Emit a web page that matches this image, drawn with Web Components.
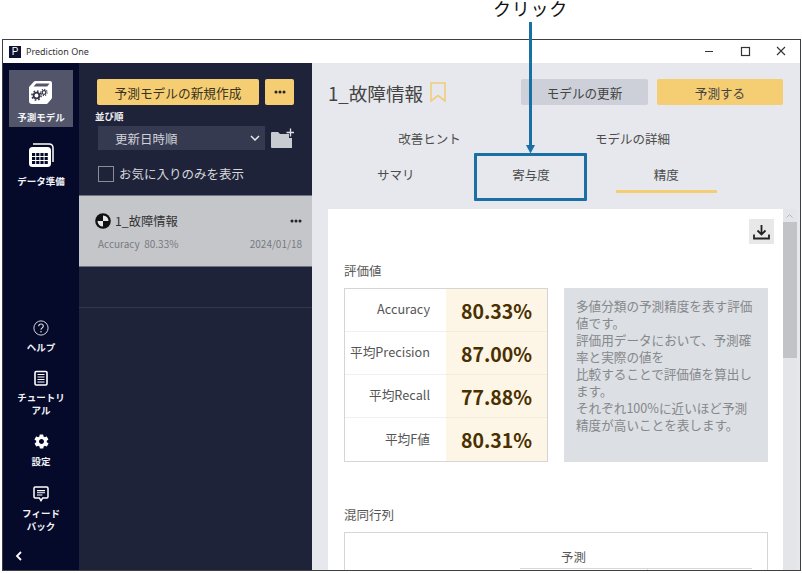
<!DOCTYPE html>
<html lang="ja">
<head>
<meta charset="utf-8">
<title>Prediction One</title>
<style>
  html, body { margin: 0; height: 100%; background: #fff; overflow: hidden; }
  body { font-family: "Noto Sans CJK JP", "Noto Sans", sans-serif; }
  svg { display: block; }
</style>
</head>
<body>
<app-window>
  <title-bar></title-bar>
  <nav-rail>
    <nav-item active>
      <svg slot="icon" style="margin-left:-2px" width="25" height="25" viewBox="0 0 25 25">
        <path d="M1 7 L6 1.5 Q6.5 1 7.5 1 H22 Q24 1 24 3 V17.5 Q24 18.5 23 19.5 L19.5 23.5 Q19 24 18 24 H4 Q1 24 1 21 Z" fill="#fff"/>
        <path d="M5.5 6.5 L8.2 3.5 H21.5 L19.2 6.5 Z" fill="#53566a"/>
        <circle cx="8.5" cy="15.5" r="2.9" fill="none" stroke="#33364a" stroke-width="1.9"/>
        <circle cx="8.5" cy="15.5" r="4.6" fill="none" stroke="#33364a" stroke-width="1.5" stroke-dasharray="1.7 1.9"/>
        <circle cx="16" cy="12.5" r="1.8" fill="none" stroke="#33364a" stroke-width="1.2"/>
        <circle cx="16" cy="12.5" r="3.1" fill="none" stroke="#33364a" stroke-width="1.1" stroke-dasharray="1.2 1.2"/>
      </svg>
      予測モデル
    </nav-item>
    <nav-item tight>
      <svg slot="icon" width="26" height="24" viewBox="0 0 26 24">
        <path d="M5 1 H21 Q25 1 25 5 V19" fill="none" stroke="#fff" stroke-width="1.5"/>
        <rect x="1" y="4" width="22" height="20" rx="3.5" fill="#fff"/>
        <path fill="#05092a" d="M4 10h3.2v3H4zM8.2 10h3.2v3H8.2zM12.4 10h3.2v3h-3.2zM16.6 10h3.2v3h-3.2zM4 14h3.2v3H4zM8.2 14h3.2v3H8.2zM12.4 14h3.2v3h-3.2zM16.6 14h3.2v3h-3.2zM4 18h3.2v3H4zM8.2 18h3.2v3H8.2zM12.4 18h3.2v3h-3.2zM16.6 18h3.2v3h-3.2z"/>
      </svg>
      データ準備
    </nav-item>
    <span class="spacer"></span>
    <nav-item>
      <svg slot="icon" width="16" height="16" viewBox="0 0 18 18">
        <circle cx="9" cy="9" r="8" fill="none" stroke="#d8d9e0" stroke-width="1.1"/>
        <path d="M6.4 7 Q6.5 4.5 9 4.5 Q11.6 4.5 11.6 6.8 Q11.6 8 10.2 8.9 Q9 9.6 9 11" fill="none" stroke="#d8d9e0" stroke-width="1.3"/>
        <circle cx="9" cy="13.2" r=".9" fill="#d8d9e0"/>
      </svg>
      ヘルプ
    </nav-item>
    <nav-item>
      <svg slot="icon" width="14" height="16" viewBox="0 0 14 16">
        <rect x="1" y="1.5" width="12" height="13.5" rx="1.2" fill="none" stroke="#fff" stroke-width="1.6"/>
        <path d="M3.5 4.5 H10.5 M3.5 7 H10.5 M3.5 9.5 H10.5 M3.5 12 H10.5" stroke="#fff" stroke-width="1.1"/>
      </svg>
      チュートリ<br>アル
    </nav-item>
    <nav-item wide>
      <svg slot="icon" width="17" height="17" viewBox="0 0 24 24">
        <path fill="#fff" d="M19.4 13c.1-.3.1-.7.1-1s0-.7-.1-1l2.1-1.6c.2-.2.2-.4.1-.6l-2-3.5c-.1-.2-.4-.3-.6-.2l-2.5 1c-.5-.4-1.1-.7-1.7-1l-.4-2.6c0-.3-.2-.5-.5-.5h-4c-.3 0-.5.2-.5.5l-.4 2.6c-.6.3-1.2.6-1.7 1l-2.5-1c-.2-.1-.5 0-.6.2l-2 3.5c-.1.2-.1.4.1.6L4.6 11c-.1.3-.1.7-.1 1s0 .7.1 1l-2.1 1.6c-.2.2-.2.4-.1.6l2 3.5c.1.2.4.3.6.2l2.5-1c.5.4 1.1.7 1.7 1l.4 2.6c0 .3.2.5.5.5h4c.3 0 .5-.2.5-.5l.4-2.6c.6-.3 1.2-.6 1.7-1l2.5 1c.2.1.5 0 .6-.2l2-3.5c.1-.2.1-.4-.1-.6L19.4 13zM12 15.5c-1.9 0-3.5-1.6-3.5-3.5s1.6-3.5 3.5-3.5 3.5 1.6 3.5 3.5-1.6 3.5-3.5 3.5z"/>
      </svg>
      設定
    </nav-item>
    <nav-item>
      <svg slot="icon" width="16" height="16" viewBox="0 0 16 16">
        <path d="M2.2 1 H13.8 Q15 1 15 2.2 V10.8 Q15 12 13.8 12 H9.6 L8 14.6 L6.4 12 H2.2 Q1 12 1 10.8 V2.2 Q1 1 2.2 1 Z" fill="none" stroke="#fff" stroke-width="1.5"/>
        <path d="M4 4.6 H12 M4 6.8 H12 M4 9 H9.4" stroke="#fff" stroke-width="1.1"/>
      </svg>
      フィード<br>バック
    </nav-item>
    <svg class="collapse" width="8" height="10" viewBox="0 0 8 10"><path d="M6 1 L2 5 L6 9" fill="none" stroke="#fff" stroke-width="1.8"/></svg>
  </nav-rail>
  <model-list></model-list>
  <main-pane>
    <score-table></score-table>
    <info-note>多値分類の予測精度を表す評価値です。<br>評価用データにおいて、予測確率と実際の値を<br>比較することで評価値を算出します。<br>それぞれ100%に近いほど予測精度が高いことを表します。</info-note>
  </main-pane>
</app-window>
<click-note></click-note>

<script>
const ICON_DOTS = `<svg width="12" height="4" viewBox="0 0 12 4"><circle cx="2" cy="2" r="1.5"/><circle cx="6" cy="2" r="1.5"/><circle cx="10" cy="2" r="1.5"/></svg>`;

class AppWindow extends HTMLElement {
    constructor() {
        super();
        this.attachShadow({ mode: 'open' });
        this.shadowRoot.innerHTML = `
            <style>
                :host {
                    display: grid;
                    grid-template-columns: 76px 233px 1fr;
                    grid-template-rows: 23px 1fr;
                    box-sizing: border-box;
                    width: 799px;
                    height: 532px;
                    margin: 39px 0 0 2px;
                    border: 1px solid #3c4043;
                    overflow: hidden;
                    background: #e6e8ed;
                }
                ::slotted(title-bar) { grid-column: 1 / -1; }
            </style>
            <slot></slot>
        `;
    }
}

class TitleBar extends HTMLElement {
    constructor() {
        super();
        this.attachShadow({ mode: 'open' });
        this.shadowRoot.innerHTML = `
            <style>
                :host {
                    display: flex;
                    align-items: center;
                    background: #fff;
                    padding-left: 6px;
                    font: 9px "Noto Sans", sans-serif;
                    color: #333;
                }
                .logo {
                    width: 12px; height: 12px; margin-right: 5px;
                    background: #0d1030; color: #fff;
                    font: 10px/12px "Liberation Sans", sans-serif;
                    text-align: center;
                }
                .controls { margin-left: auto; display: flex; }
                .controls svg { width: 36px; height: 23px; display: block; }
            </style>
            <span class="logo">P</span>Prediction One
            <span class="controls">
                <svg viewBox="0 0 36 23"><path d="M13 11.5 H21" stroke="#333"/></svg>
                <svg viewBox="0 0 36 23"><rect x="13.5" y="7.5" width="8" height="8" fill="none" stroke="#333" stroke-width="1.2"/></svg>
                <svg viewBox="0 0 36 23"><path d="M13 7 L21 15 M21 7 L13 15" stroke="#333" stroke-width="1.1"/></svg>
            </span>
        `;
    }
}

class NavRail extends HTMLElement {
    constructor() {
        super();
        this.attachShadow({ mode: 'open' });
        this.shadowRoot.innerHTML = `
            <style>
                :host {
                    display: flex;
                    flex-direction: column;
                    align-items: center;
                    background: #05092a;
                    padding-top: 7px;
                    height: 100%;
                    box-sizing: border-box;
                }
                ::slotted(.spacer) { flex: 1; }
                ::slotted(.collapse) { align-self: flex-start; margin: 2px 0 9px 12px; }
            </style>
            <slot></slot>
        `;
    }
}

class NavItem extends HTMLElement {
    constructor() {
        super();
        this.attachShadow({ mode: 'open' });
        this.shadowRoot.innerHTML = `
            <style>
                :host {
                    display: flex;
                    flex-direction: column;
                    align-items: center;
                    box-sizing: border-box;
                    width: 64px;
                    margin-bottom: 16px;
                    color: #f2f3f7;
                    font-family: "Liberation Sans", "Noto Sans CJK JP", sans-serif;
                    font-size: 9.5px;
                    font-weight: 700;
                    line-height: 13px;
                    text-align: center;
                }
                :host([active]) {
                    background: #53566a;
                    height: 57px;
                    justify-content: flex-end;
                    padding-bottom: 3px;
                }
                :host([wide]) { margin-bottom: 18.5px; }
                .icon { margin-bottom: 5px; }
                :host([active]) .icon { margin-bottom: 6px; }
                :host([tight]) .icon { margin-bottom: 8px; }
            </style>
            <div class="icon"><slot name="icon"></slot></div>
            <div><slot></slot></div>
        `;
    }
}

class ModelList extends HTMLElement {
    constructor() {
        super();
        this.attachShadow({ mode: 'open' });
        this.shadowRoot.innerHTML = `
            <style>
                :host {
                    display: flex;
                    flex-direction: column;
                    background: #1f2339;
                    color: #e2e3e8;
                }
                .top { height: 132px; box-sizing: border-box; padding: 16px 18px 0 16px; }
                .row { display: flex; gap: 6px; }
                .btn {
                    height: 26px; display: flex; align-items: center; justify-content: center;
                    background: #f5cd73; border-radius: 2px; color: #3a3320;
                    font-size: 12.7px;
                }
                .new { width: 162px; margin-left: 2px; }
                .more { width: 29px; fill: #222; }
                .sort { margin: 4px 0 3px; font-size: 9.5px; font-weight: 700; line-height: 14px; color: #f0f0f0; }
                .select {
                    width: 167px; height: 24px; margin-left: 3px; box-sizing: border-box;
                    display: flex; align-items: center; justify-content: space-between;
                    padding: 0 5px 0 17px; background: #363a50; font-size: 12.5px; color: #cfd1d8;
                }
                .sortrow { align-items: center; }
                .check { display: flex; align-items: center; margin: 14px 0 0 3px; font-size: 12.5px; color: #d6d7dc; }
                .box { width: 14px; height: 14px; border: 1px solid #8a8c98; margin-right: 5px; }
                .card {
                    height: 72px; box-sizing: border-box; padding: 15px 10px 0 16px;
                    background: #c4c6ca; color: #333;
                    border-top: 1px solid #6f7284; border-bottom: 1px solid #6f7284;
                }
                .name { display: flex; align-items: center; font-size: 12.3px; line-height: 20px; }
                .name svg:first-child { margin-right: 4px; }
                .name svg:last-child { margin-left: auto; fill: #222; }
                .meta { display: flex; justify-content: space-between; margin: 6px 0 0 3px; font-size: 10px; line-height: 14px; color: #777a80; }
                .gap { height: 40px; border-bottom: 1px solid #33374c; }
            </style>
            <div class="top">
                <div class="row">
                    <div class="btn new">予測モデルの新規作成</div>
                    <div class="btn more">${ICON_DOTS}</div>
                </div>
                <div class="sort">並び順</div>
                <div class="row sortrow">
                    <div class="select">更新日時順
                        <svg width="10" height="6" viewBox="0 0 10 6"><path d="M1 1 L5 5 L9 1" fill="none" stroke="#e8e8e8" stroke-width="1.5"/></svg>
                    </div>
                    <svg width="23" height="22" viewBox="0 0 23 22">
                        <path d="M0 6 Q0 5 1 5 H7 L9 7 H21 V21 H1 Q0 21 0 20 Z" fill="#c9cbd2"/>
                        <path d="M19.5 0 V11 M14 5.5 H23" stroke="#1f2339" stroke-width="3"/>
                        <path d="M19.5 1.5 V9.5 M15.5 5.5 H23" stroke="#e0e2e6" stroke-width="1.3"/>
                    </svg>
                </div>
                <div class="check"><span class="box"></span>お気に入りのみを表示</div>
            </div>
            <div class="card">
                <div class="name">
                    <svg width="16" height="16" viewBox="0 0 16 16">
                        <circle cx="8" cy="8" r="7.8" fill="#111"/>
                        <path d="M8 8 V2.5 A5.5 5.5 0 0 1 13.5 8 Z M8 8 V13.5 A5.5 5.5 0 0 1 2.5 8 Z" fill="#e6e6e6"/>
                    </svg>
                    1_故障情報
                    ${ICON_DOTS}
                </div>
                <div class="meta"><span>Accuracy&nbsp; 80.33%</span><span>2024/01/18</span></div>
            </div>
            <div class="gap"></div>
        `;
    }
}

class MainPane extends HTMLElement {
    constructor() {
        super();
        this.attachShadow({ mode: 'open' });
        this.shadowRoot.innerHTML = `
            <style>
                :host {
                    display: block;
                    position: relative;
                    min-width: 0;
                    overflow: hidden;
                    color: #444;
                }
                .head { display: flex; align-items: center; height: 26px; padding: 16px 17px 0 16px; }
                h1 { margin: 1px 0 0; font-size: 18.6px; font-weight: 400; line-height: 26px; }
                .mark { margin-left: 7px; }
                .btn {
                    height: 26px; display: flex; align-items: center; justify-content: center;
                    border-radius: 2px; font-size: 12.6px;
                }
                .update { width: 127px; margin-left: auto; background: #cdd0d8; }
                .run { width: 126px; margin-left: 9px; background: #f5cd73; }
                .tabs { width: 406px; margin: 18px 0 0 16px; font-size: 12.5px; color: #4c4c4c; }
                .tabrow { display: grid; height: 36px; text-align: center; line-height: 31px; }
                .two { grid-template-columns: repeat(2, 1fr); }
                .three { grid-template-columns: repeat(3, 1fr); height: 35px; }
                .on { position: relative; }
                .on::after {
                    content: ""; position: absolute; left: 12.5%; right: 12.5%; bottom: 1px; height: 3px;
                    background: #f5cd73;
                }
                .work { display: flex; align-items: flex-start; margin: 15px 3px 0 16px; }
                .card {
                    flex: 1; height: 361px; box-sizing: border-box; padding: 10px 15px 0 16px;
                    background: #fff; overflow: hidden;
                }
                .dl {
                    width: 25px; height: 25px; margin: 0 -6px 0 auto; background: #e8e8e8;
                    display: flex; align-items: center; justify-content: center;
                }
                h2 { margin: 18px 0 9px; font-size: 12.5px; font-weight: 400; line-height: 17px; color: #555; }
                .metrics { display: grid; grid-template-columns: 204px 204px; gap: 16px; height: 174px; }
                h2.next { margin: 44px 0 9px; }
                .matrix { height: 80px; border: 1px solid #d6d6d6; }
                .pred { margin-top: 15px; padding-left: 216px; font-size: 12.5px; line-height: 18px; color: #555; }
                .grid { display: grid; grid-template-columns: 127px 105px; height: 6px; width: 232px; border-top: 1px solid #d6d6d6; margin: 2px 0 0 175px; }
                .grid span + span { border-left: 1px solid #d6d6d6; }
                .bar { width: 14px; height: 361px; background: #e3e5e8; position: relative; }
                .thumb { position: absolute; top: 13px; left: 0; right: 0; height: 136px; background: #c2c3c6; }
                .bar svg { position: absolute; left: 3px; }
            </style>
            <div class="head">
                <h1>1_故障情報</h1>
                <svg class="mark" width="16" height="20" viewBox="0 0 16 20"><path d="M1 1 H15 V19 L8 13.5 L1 19 Z" fill="none" stroke="#f0cd7a" stroke-width="1.6"/></svg>
                <div class="btn update">モデルの更新</div>
                <div class="btn run">予測する</div>
            </div>
            <div class="tabs">
                <div class="tabrow two"><span>改善ヒント</span><span>モデルの詳細</span></div>
                <div class="tabrow three"><span>サマリ</span><span>寄与度</span><span class="on">精度</span></div>
            </div>
            <div class="work">
                <div class="card">
                    <div class="dl">
                        <svg width="17" height="16" viewBox="0 0 17 16"><path d="M8.5 1 V10 M4.5 6.5 L8.5 10.5 L12.5 6.5 M1 10.5 V14.5 H16 V10.5" fill="none" stroke="#222" stroke-width="1.8"/></svg>
                    </div>
                    <h2>評価値</h2>
                    <div class="metrics"><slot></slot></div>
                    <h2 class="next">混同行列</h2>
                    <div class="matrix">
                        <div class="pred">予測</div>
                        <div class="grid"><span></span><span></span></div>
                    </div>
                </div>
                <div class="bar">
                    <svg style="top:5px" width="7" height="4" viewBox="0 0 7 4"><path d="M.5 3.5 L3.5 .5 L6.5 3.5" fill="none" stroke="#b5b6b9"/></svg>
                    <div class="thumb"></div>
                </div>
            </div>
        `;
    }
}

class ScoreTable extends HTMLElement {
    constructor() {
        super();
        this.attachShadow({ mode: 'open' });
        const rows = [
            ['Accuracy', '80.33%'],
            ['平均Precision', '87.00%'],
            ['平均Recall', '77.88%'],
            ['平均F値', '80.31%'],
        ];
        this.shadowRoot.innerHTML = `
            <style>
                :host {
                    display: grid;
                    grid-template-columns: 1fr 1fr;
                    grid-auto-rows: 1fr;
                    border: 1px solid #d5d5d5;
                    box-sizing: border-box;
                    height: 174px;
                }
                div { display: flex; align-items: center; box-sizing: border-box; }
                .k { justify-content: flex-end; padding: 0 16px 3px 0; font-size: 12.7px; color: #555; }
                .v {
                    justify-content: center; background: #fdf6e6;
                    font-size: 19.5px; font-weight: 700; color: #4a3000;
                }
                .line { border-bottom: 1px solid #f0f0f0; }
                .v.line { border-bottom-color: #f5ecd8; }
            </style>
            ${rows.map(([k, v], i) => {
                const line = i < rows.length - 1 ? 'line' : '';
                return `<div class="k ${line}">${k}</div><div class="v ${line}">${v}</div>`;
            }).join('')}
        `;
    }
}

class InfoNote extends HTMLElement {
    constructor() {
        super();
        this.attachShadow({ mode: 'open' });
        this.shadowRoot.innerHTML = `
            <style>
                :host {
                    display: block;
                    box-sizing: border-box;
                    height: 174px;
                    padding: 9px 12px 0 12px;
                    background: #dcdfe3;
                    color: #85888c;
                    font-size: 12.6px;
                    line-height: 17px;
                }
            </style>
            <slot></slot>
        `;
    }
}

class ClickNote extends HTMLElement {
    constructor() {
        super();
        this.attachShadow({ mode: 'open' });
        this.shadowRoot.innerHTML = `
            <style>
                :host { position: absolute; left: 474px; top: 0; width: 113px; height: 201px; }
                .label {
                    position: absolute; left: 0; right: 0; top: 0; text-align: center;
                    font-family: "Liberation Sans", "Noto Sans CJK JP", sans-serif;
                    font-size: 18px; line-height: 21px; color: #111; letter-spacing: .8px;
                }
                svg { position: absolute; left: 0; top: 0; }
                .frame {
                    position: absolute; left: 0; right: 0; top: 153px; bottom: 0;
                    border: 3px solid #1a6fa5; border-radius: 1px;
                }
            </style>
            <div class="label">クリック</div>
            <svg width="113" height="154" viewBox="0 0 113 154">
                <path d="M56.5 22 V146" stroke="#1a6fa5" stroke-width="3"/>
                <path d="M52 145 H61 L56.5 153.5 Z" fill="#1a6fa5"/>
            </svg>
            <div class="frame"></div>
        `;
    }
}

customElements.define('app-window', AppWindow);
customElements.define('title-bar', TitleBar);
customElements.define('nav-rail', NavRail);
customElements.define('nav-item', NavItem);
customElements.define('model-list', ModelList);
customElements.define('main-pane', MainPane);
customElements.define('score-table', ScoreTable);
customElements.define('info-note', InfoNote);
customElements.define('click-note', ClickNote);
</script>
</body>
</html>
